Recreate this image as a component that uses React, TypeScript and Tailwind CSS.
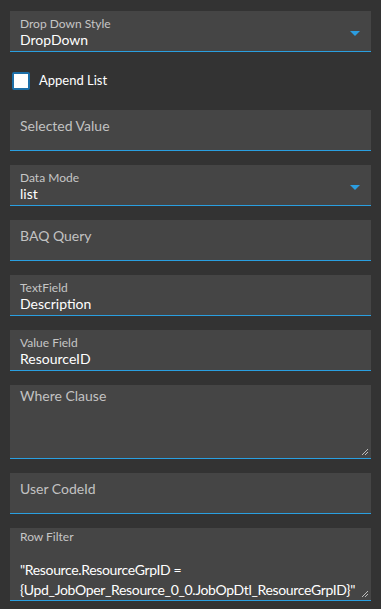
import React from 'react';

const font = { fontFamily: 'Lato, "Liberation Sans", sans-serif' };

function Arrow() {
  return (
    <svg width="10" height="5" viewBox="0 0 10 5" className="absolute right-[11px] top-[20px]">
      <path d="M0 0 L10 0 L5 5 Z" fill="#2b9de0" />
    </svg>
  );
}

function Grip() {
  return (
    <svg width="8" height="8" viewBox="0 0 8 8" className="absolute right-[2px] bottom-[2px]">
      <path d="M7 1 L1 7 M7 4 L4 7" stroke="#bdbdbd" strokeWidth="1" />
    </svg>
  );
}

function LabeledField({ label, value, dropdown }: { label: string; value: string; dropdown?: boolean }) {
  return (
    <div className="relative h-[41px] bg-[#454545] border-b border-[#2a9fe0] px-[10px] pt-[5px]">
      <div className="text-[12px] leading-[15px] text-[#c6c6c6]">{label}</div>
      <div className="text-[14px] leading-[18px] text-white">{value}</div>
      {dropdown && <Arrow />}
    </div>
  );
}

function EmptyField({ label }: { label: string }) {
  return (
    <div className="h-[41px] bg-[#454545] border-b border-[#2a9fe0] px-[10px] pt-[7px]">
      <div className="text-[14px] leading-[18px] text-[#c2c2c2]">{label}</div>
    </div>
  );
}

export default function App() {
  return (
    <div style={font} className="min-h-[609px] w-[381px] bg-[#333333] px-[10px] pt-[11px] flex flex-col gap-[14px]">
      <LabeledField label="Drop Down Style" value="DropDown" dropdown />

      <div className="flex items-center gap-[9px] h-[30px] pl-[2px]">
        <div className="w-[18px] h-[18px] border-2 border-[#1c6fa8] bg-white rounded-[2px]" />
        <span className="text-[13px] text-white">Append List</span>
      </div>

      <EmptyField label="Selected Value" />
      <LabeledField label="Data Mode" value="list" dropdown />
      <EmptyField label="BAQ Query" />
      <LabeledField label="TextField" value="Description" />
      <LabeledField label="Value Field" value="ResourceID" />

      <div className="relative h-[74px] bg-[#454545] border-b border-[#2a9fe0] px-[10px] pt-[2px]">
        <div className="text-[14px] leading-[18px] text-[#c2c2c2]">Where Clause</div>
        <Grip />
      </div>

      <EmptyField label="User CodeId" />

      <div className="relative h-[73px] bg-[#454545] border-b border-[#2a9fe0] px-[10px] pt-[1px]">
        <div className="text-[12px] leading-[15px] text-[#c6c6c6]">Row Filter</div>
        <div className="mt-[16px] text-[14px] leading-[20px] text-white tracking-[-0.35px]">
          "Resource.ResourceGrpID =<br />
          {'{Upd_JobOper_Resource_0_0.JobOpDtl_ResourceGrpID}"'}
        </div>
        <Grip />
      </div>
    </div>
  );
}
